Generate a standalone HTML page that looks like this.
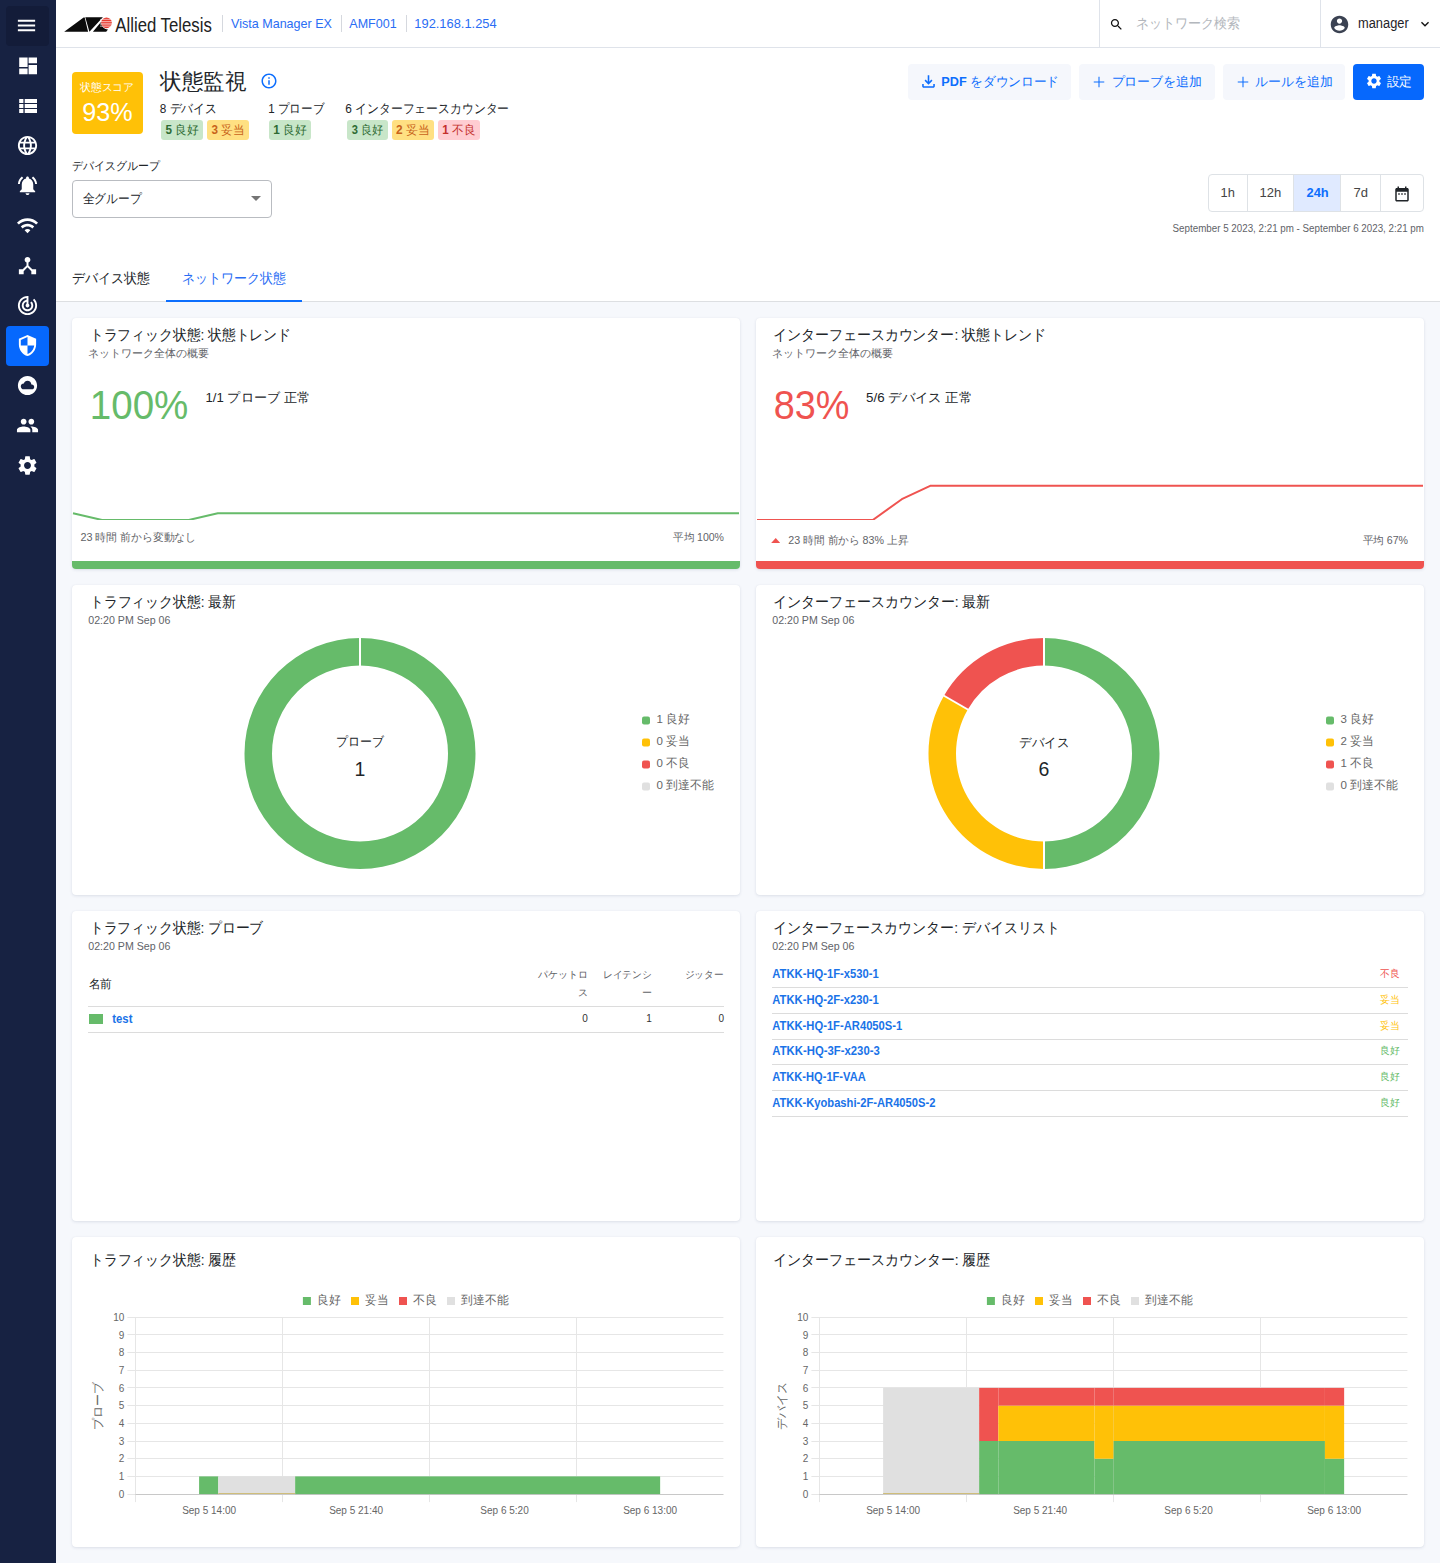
<!DOCTYPE html>
<html lang="ja">
<head>
<meta charset="utf-8">
<title>Vista Manager EX</title>
<style>
*{box-sizing:border-box;margin:0;padding:0}
html,body{width:1440px;height:1563px;overflow:hidden}
body{font-family:"Liberation Sans",sans-serif;background:#f6f8fc;color:#212529;position:relative;font-size:13px;line-height:16px}
.t{position:absolute;white-space:nowrap;display:block;transform-origin:0 50%}
.a{position:absolute;display:block}
#side{position:absolute;left:0;top:0;width:56px;height:1563px;background:#172242}
#side .it{position:absolute;left:6px;width:43px;height:40px;border-radius:4px}
#side .it svg{position:absolute;left:10.200px;top:8px;width:23px;height:23px;fill:#fff}
#side .menu svg{left:9.300px;top:8px}
#side .menu{background:#131c39}
#side .act{background:#0668fd}
#top{position:absolute;left:56px;top:0;width:1384px;height:48px;background:#fff;border-bottom:1px solid #dfe3ea}
#hdr{position:absolute;left:56px;top:48px;width:1384px;height:254px;background:#fff;border-bottom:1px solid #dddfe2}
.card{position:absolute;width:668px;background:#fff;border-radius:4px;box-shadow:0 1px 3px rgba(40,60,100,.12),0 0 1px rgba(40,60,100,.07)}
.vl{position:absolute;width:1px;background:#dfe3ea}
.hl{position:absolute;height:1px;background:#dcdcdc}
.btn{position:absolute;top:64px;height:36px;border-radius:4px;background:#f5f7fc}
.chip{position:absolute;top:120px;height:19.5px;border-radius:3px}
svg{display:block}
</style>
</head>
<body>
<div id="side">
<div class="it menu" style="top:6px"><svg viewBox="0 0 24 24"><path d="M3 18h18v-2H3v2zm0-5h18v-2H3v2zm0-7v2h18V6H3z"/></svg></div>
<div class="it" style="top:46px"><svg style="left:0;top:0;width:43px;height:40px" viewBox="6 46 43 40"><path d="M19.200 57.600h8.400v9.300h-8.400zM19.200 68.400h8.400v5.900h-8.400zM28.600 57.600H37v5.700h-8.400zM28.600 64.900H37v9.400h-8.400z"/></svg></div>
<div class="it" style="top:86px"><svg style="left:0;top:0;width:43px;height:40px" viewBox="6 86 43 40"><path d="M19.200 99h4.200v4.100h-4.200zM19.200 104.100h4.200v3.900h-4.200zM19.200 109h4.200v4h-4.200zM24.700 99H37v4.100H24.700zM24.700 104.100H37v3.900H24.700zM24.700 109H37v4H24.700z"/></svg></div>
<div class="it" style="top:126px"><svg viewBox="0 0 24 24"><path d="M11.99 2C6.47 2 2 6.48 2 12s4.47 10 9.99 10C17.52 22 22 17.52 22 12S17.52 2 11.99 2zm6.93 6h-2.95c-.32-1.25-.78-2.45-1.38-3.56 1.84.63 3.37 1.91 4.33 3.56zM12 4.04c.83 1.2 1.48 2.53 1.91 3.96h-3.82c.43-1.43 1.08-2.76 1.91-3.96zM4.26 14C4.1 13.36 4 12.69 4 12s.1-1.36.26-2h3.38c-.08.66-.14 1.32-.14 2 0 .68.06 1.34.14 2H4.26zm.82 2h2.95c.32 1.25.78 2.45 1.38 3.56-1.84-.63-3.37-1.9-4.33-3.56zm2.95-8H5.08c.96-1.66 2.49-2.93 4.33-3.56C8.81 5.55 8.35 6.75 8.03 8zM12 19.96c-.83-1.2-1.48-2.53-1.91-3.96h3.82c-.43 1.43-1.08 2.76-1.91 3.96zM14.34 14H9.66c-.09-.66-.16-1.32-.16-2 0-.68.07-1.35.16-2h4.68c.09.65.16 1.32.16 2 0 .68-.07 1.34-.16 2zm.25 5.56c.6-1.11 1.06-2.31 1.38-3.56h2.95c-.96 1.65-2.49 2.93-4.33 3.56zM16.36 14c.08-.66.14-1.32.14-2 0-.68-.06-1.34-.14-2h3.38c.16.64.26 1.31.26 2s-.1 1.36-.26 2h-3.38z"/></svg></div>
<div class="it" style="top:166px"><svg viewBox="0 0 24 24"><path d="M7.58 4.08L6.15 2.65C3.75 4.48 2.17 7.3 2.03 10.5h2c.15-2.65 1.51-4.97 3.55-6.42zm12.39 6.42h2c-.15-3.2-1.73-6.02-4.12-7.85l-1.42 1.43c2.02 1.45 3.39 3.77 3.54 6.42zM18 11c0-3.07-1.64-5.64-4.5-6.32V4c0-.83-.67-1.5-1.5-1.5s-1.5.67-1.5 1.5v.68C7.63 5.36 6 7.92 6 11v5l-2 2v1h16v-1l-2-2v-5zm-6 11c.14 0 .27-.01.4-.04.65-.14 1.18-.58 1.44-1.18.1-.24.15-.5.15-.78h-4c.01 1.1.9 2 2.01 2z"/></svg></div>
<div class="it" style="top:206px"><svg viewBox="0 0 24 24"><path d="M1 9l2 2c4.97-4.97 13.03-4.97 18 0l2-2C16.93 2.93 7.08 2.93 1 9zm8 8l3 3 3-3c-1.65-1.66-4.34-1.66-6 0zm-4-4l2 2c2.76-2.76 7.24-2.76 10 0l2-2C15.14 9.14 8.87 9.14 5 13z"/></svg></div>
<div class="it" style="top:246px"><svg viewBox="0 0 24 24"><path d="M17 16l-4-4V8.82C14.16 8.4 15 7.3 15 6c0-1.66-1.34-3-3-3S9 4.34 9 6c0 1.3.84 2.4 2 2.82V12l-4 4H3v5h5v-3.05l4-4.2 4 4.2V21h5v-5h-4z"/></svg></div>
<div class="it" style="top:286px"><svg viewBox="0 0 24 24"><path d="M19.07 4.93l-1.41 1.41C19.1 7.79 20 9.79 20 12c0 4.42-3.58 8-8 8s-8-3.58-8-8c0-4.08 3.05-7.44 7-7.93v2.02C8.16 6.57 6 9.03 6 12c0 3.31 2.69 6 6 6s6-2.69 6-6c0-1.66-.67-3.16-1.76-4.24l-1.41 1.41C15.55 9.9 16 10.9 16 12c0 2.21-1.79 4-4 4s-4-1.79-4-4c0-1.86 1.28-3.41 3-3.86v2.14c-.6.35-1 .98-1 1.72 0 1.1.9 2 2 2s2-.9 2-2c0-.74-.4-1.38-1-1.72V2h-1C6.48 2 2 6.48 2 12s4.48 10 10 10 10-4.48 10-10c0-2.76-1.12-5.26-2.93-7.07z"/></svg></div>
<div class="it act" style="top:326px"><svg viewBox="0 0 24 24"><path d="M12 1L3 5v6c0 5.55 3.84 10.74 9 12 5.16-1.26 9-6.45 9-12V5l-9-4zm0 10.99h7c-.53 4.12-3.28 7.79-7 8.94V12H5V6.3l7-3.11v8.8z"/></svg></div>
<div class="it" style="top:366px"><svg viewBox="0 0 24 24"><path d="M12 2C6.48 2 2 6.48 2 12s4.48 10 10 10 10-4.48 10-10S17.520 2 12 2zm4.5 14H8c-1.660 0-3-1.340-3-3s1.340-3 3-3l.14.01C8.58 8.28 10.13 7 12 7c2.21 0 4 1.79 4 4h.5c1.38 0 2.5 1.12 2.5 2.5S17.880 16 16.5 16z"/></svg></div>
<div class="it" style="top:406px"><svg viewBox="0 0 24 24"><path d="M16 11c1.66 0 2.99-1.34 2.99-3S17.66 5 16 5c-1.66 0-3 1.34-3 3s1.34 3 3 3zm-8 0c1.66 0 2.99-1.34 2.99-3S9.66 5 8 5C6.34 5 5 6.34 5 8s1.34 3 3 3zm0 2c-2.33 0-7 1.17-7 3.5V19h14v-2.5c0-2.33-4.67-3.5-7-3.5zm8 0c-.29 0-.62.02-.97.05 1.16.84 1.97 1.97 1.97 3.45V19h6v-2.5c0-2.33-4.67-3.5-7-3.5z"/></svg></div>
<div class="it" style="top:446px"><svg viewBox="0 0 24 24"><path d="M19.14 12.94c.04-.3.06-.61.06-.94 0-.32-.02-.64-.07-.94l2.03-1.58c.18-.14.23-.41.12-.61l-1.92-3.32c-.12-.22-.37-.29-.59-.22l-2.39.96c-.5-.38-1.03-.7-1.62-.94l-.36-2.54c-.04-.24-.24-.41-.48-.41h-3.84c-.24 0-.43.17-.47.41l-.36 2.54c-.59.24-1.13.57-1.62.94l-2.39-.96c-.22-.08-.47 0-.59.22L2.74 8.87c-.12.21-.08.47.12.61l2.03 1.58c-.05.3-.09.63-.09.94s.02.64.07.94l-2.03 1.58c-.18.14-.23.41-.12.61l1.92 3.32c.12.22.37.29.59.22l2.39-.96c.5.38 1.03.7 1.62.94l.36 2.54c.05.24.24.41.48.41h3.84c.24 0 .44-.17.47-.41l.36-2.54c.59-.24 1.13-.56 1.62-.94l2.39.96c.22.08.47 0 .59-.22l1.92-3.32c.12-.22.07-.47-.12-.61l-2.01-1.58zM12 15.6c-1.98 0-3.6-1.62-3.6-3.6s1.62-3.6 3.6-3.600 3.600 1.620 3.600 3.600-1.620 3.600-3.600 3.600z"/></svg></div>
</div>
<div id="top"></div>
<svg class="a" style="left:60px;top:10px" width="160" height="30" viewBox="60 10 160 30">
<path fill="#0b0b0b" d="M64.200 31.700L83.600 17.400h1.100l3.400 14.300zM85.300 17.300h17.600L89.400 31.700zM92.900 31.700l8.500-10.300c-.6 4.200 2.300 7.700 6.600 8.100l-1.800 2.200z"/>
<circle cx="106.500" cy="22.800" r="5.400" fill="#e63a30"/>
<path stroke="#fff" stroke-width=".55" d="M100 19.400h13M100 21.500h13M100 23.300h13M100 24.800h13M100 26.300h13"/>
<text x="115.300" y="31.500" font-family="Liberation Sans,sans-serif" font-size="19.600" fill="#222" textLength="96.500" lengthAdjust="spacingAndGlyphs">Allied Telesis</text>
</svg>
<div class="vl" style="left:222px;top:15px;height:17px;background:#d5d8de"></div><div class="vl" style="left:341px;top:15px;height:17px;background:#d5d8de"></div><div class="vl" style="left:406px;top:15px;height:17px;background:#d5d8de"></div>
<div class="vl" style="left:1099px;top:0;height:47px"></div><div class="vl" style="left:1320px;top:0;height:47px"></div>
<svg class="a" style="left:1108.5px;top:16.5px" width="15" height="15" viewBox="0 0 24 24"><path fill="#111" d="M15.5 14h-.79l-.28-.27C15.41 12.59 16 11.11 16 9.5 16 5.91 13.09 3 9.5 3S3 5.91 3 9.5 5.91 16 9.5 16c1.61 0 3.09-.59 4.23-1.57l.27.28v.79l5 4.99L20.49 19l-4.99-5zm-6 0C7.01 14 5 11.99 5 9.5S7.01 5 9.5 5 14 7.01 14 9.5 11.99 14 9.5 14z"/></svg><svg class="a" style="left:1329px;top:14px" width="21" height="21" viewBox="0 0 24 24"><path fill="#3b4252" d="M12 2C6.48 2 2 6.48 2 12s4.48 10 10 10 10-4.48 10-10S17.52 2 12 2zm0 3c1.66 0 3 1.34 3 3s-1.34 3-3 3-3-1.34-3-3 1.34-3 3-3zm0 14.2c-2.5 0-4.71-1.28-6-3.22.03-1.990 4-3.080 6-3.080 1.990 0 5.970 1.090 6 3.080-1.290 1.940-3.500 3.220-6 3.220z"/></svg><svg class="a" style="left:1416.5px;top:16px" width="16" height="16" viewBox="0 0 24 24"><path fill="#111" d="M16.59 8.59L12 13.17 7.41 8.59 6 10l6 6 6-6z"/></svg><div id="hdr"></div>
<div class="a" style="left:72px;top:72px;width:71px;height:62px;border-radius:4px;background:#ffc107"></div><svg class="a" style="left:260px;top:72.3px" width="18" height="18" viewBox="0 0 24 24"><path fill="#0d6efd" d="M11 7h2v2h-2zm0 4h2v6h-2zm1-9C6.48 2 2 6.48 2 12s4.48 10 10 10 10-4.48 10-10S17.52 2 12 2zm0 18c-4.41 0-8-3.59-8-8s3.59-8 8-8 8 3.59 8 8-3.59 8-8 8z"/></svg><div class="chip" style="left:161px;width:42px;background:#c8e6c9"></div><div class="chip" style="left:207px;width:42px;background:#ffe082"></div><div class="chip" style="left:268.7px;width:42.10000000000002px;background:#c8e6c9"></div><div class="chip" style="left:347.3px;width:40.39999999999998px;background:#c8e6c9"></div><div class="chip" style="left:391.5px;width:42.5px;background:#ffe082"></div><div class="chip" style="left:437.8px;width:41.89999999999998px;background:#ffcdd2"></div>
<div class="btn" style="left:908px;width:163px"></div><div class="btn" style="left:1079px;width:136px"></div><div class="btn" style="left:1223px;width:122px"></div><div class="btn" style="left:1353px;width:71px;background:#0668fd"></div>
<svg class="a" style="left:919px;top:71.5px" width="19" height="19" viewBox="0 0 24 24"><path fill="#0d6efd" d="M18 15v3H6v-3H4v3c0 1.1.9 2 2 2h12c1.1 0 2-.9 2-2v-3h-2zm-1-4l-1.41-1.41L13 12.17V4h-2v8.17L8.41 9.59 7 11l5 5 5-5z"/></svg><svg class="a" style="left:1090.4px;top:72.5px" width="18" height="18" viewBox="0 0 24 24"><path fill="#0d6efd" d="M19 12.700h-6.300V19h-1.400v-6.300H5v-1.400h6.300V5h1.400v6.300H19z"/></svg><svg class="a" style="left:1234.2px;top:72.5px" width="18" height="18" viewBox="0 0 24 24"><path fill="#0d6efd" d="M19 12.700h-6.300V19h-1.400v-6.300H5v-1.400h6.300V5h1.400v6.300H19z"/></svg><svg class="a" style="left:1365px;top:72px" width="18" height="18" viewBox="0 0 24 24"><path fill="#fff" d="M19.14 12.94c.04-.3.06-.61.06-.94 0-.32-.02-.64-.07-.94l2.03-1.58c.18-.14.23-.41.12-.61l-1.92-3.32c-.12-.22-.37-.29-.59-.22l-2.39.96c-.5-.38-1.03-.7-1.62-.94l-.36-2.54c-.04-.24-.24-.41-.48-.41h-3.84c-.24 0-.43.17-.47.41l-.36 2.54c-.59.24-1.13.57-1.62.94l-2.39-.96c-.22-.08-.47 0-.59.22L2.74 8.87c-.12.21-.08.47.12.61l2.03 1.58c-.05.3-.09.63-.09.94s.02.64.07.94l-2.03 1.58c-.18.14-.23.41-.12.61l1.92 3.32c.12.22.37.29.59.22l2.39-.96c.5.38 1.03.7 1.62.94l.36 2.54c.05.24.24.41.48.41h3.84c.24 0 .44-.17.47-.41l.36-2.54c.59-.24 1.13-.56 1.62-.94l2.39.96c.22.08.47 0 .59-.22l1.92-3.32c.12-.22.07-.47-.12-.61l-2.01-1.58zM12 15.6c-1.98 0-3.6-1.62-3.6-3.6s1.62-3.6 3.6-3.600 3.600 1.620 3.600 3.600-1.620 3.600-3.600 3.600z"/></svg>
<div class="a" style="left:72px;top:180px;width:200px;height:38px;border:1px solid #b9bcc1;border-radius:4px;background:#fff"></div><svg class="a" style="left:251px;top:196px" width="10" height="5"><path d="M0 0h10L5 5z" fill="#757575"/></svg>
<div class="a" style="left:1207.500px;top:174px;width:216.500px;height:38px;border:1px solid #dee2e6;border-radius:4px;background:#fff"></div><div class="a" style="left:1293.500px;top:175px;width:47px;height:36px;background:#e0eaff"></div><div class="vl" style="left:1247px;top:175px;height:36px;background:#dee2e6"></div><div class="vl" style="left:1293px;top:175px;height:36px;background:#dee2e6"></div><div class="vl" style="left:1340px;top:175px;height:36px;background:#dee2e6"></div><div class="vl" style="left:1380px;top:175px;height:36px;background:#dee2e6"></div><svg class="a" style="left:1393px;top:185px" width="18" height="18" viewBox="0 0 24 24"><path fill="#212529" d="M9 11H7v2h2v-2zm4 0h-2v2h2v-2zm4 0h-2v2h2v-2zm2-7h-1V2h-2v2H8V2H6v2H5c-1.11 0-1.99.9-1.99 2L3 20c0 1.1.89 2 2 2h14c1.1 0 2-.9 2-2V6c0-1.1-.9-2-2-2zm0 16H5V9h14v11z"/></svg>
<div class="a" style="left:166px;top:300px;width:136px;height:2px;background:#0d6efd"></div>
<div class="card" style="left:72px;top:318px;height:251px"></div><div class="a" style="left:72px;top:561px;width:668px;height:8px;background:#66bb6a;border-radius:0 0 4px 4px"></div><svg class="a" style="left:72px;top:470px;overflow:hidden" width="667" height="50" viewBox="0 0 667 50"><path d="M1.0 43.2 L30.0 50.0 L58.9 50.0 L87.9 50.0 L116.8 50.0 L145.8 43.2 L174.7 43.2 L203.7 43.2 L232.7 43.2 L261.6 43.2 L290.6 43.2 L319.5 43.2 L348.5 43.2 L377.4 43.2 L406.4 43.2 L435.3 43.2 L464.3 43.2 L493.3 43.2 L522.2 43.2 L551.2 43.2 L580.1 43.2 L609.1 43.2 L638.0 43.2 L667.0 43.2" fill="none" stroke="#66bb6a" stroke-width="2" stroke-linejoin="round"/></svg>
<div class="card" style="left:756px;top:318px;height:251px"></div><div class="a" style="left:756px;top:561px;width:668px;height:8px;background:#ef5350;border-radius:0 0 4px 4px"></div><svg class="a" style="left:756px;top:470px;overflow:hidden" width="667" height="50" viewBox="0 0 667 50"><path d="M1.0 50.0 L30.0 50.0 L58.9 50.0 L87.9 50.0 L116.8 50.0 L145.8 29.2 L174.7 15.7 L203.7 15.7 L232.7 15.7 L261.6 15.7 L290.6 15.7 L319.5 15.7 L348.5 15.7 L377.4 15.7 L406.4 15.7 L435.3 15.7 L464.3 15.7 L493.3 15.7 L522.2 15.7 L551.2 15.7 L580.1 15.7 L609.1 15.7 L638.0 15.7 L667.0 15.7" fill="none" stroke="#ef5350" stroke-width="2" stroke-linejoin="round"/></svg><svg class="a" style="left:771px;top:538px" width="9.400" height="5.200"><path d="M0 5.200L4.700 0l4.700 5.200z" fill="#ef5350"/></svg>
<div class="card" style="left:72px;top:585px;height:310px"></div><svg class="a" style="left:72px;top:585px" width="668" height="310" viewBox="0 0 668 310"><path fill-rule="evenodd" fill="#66bb6a" d="M172.50 168.50a115.50 115.50 0 1 0 231.00 0a115.50 115.50 0 1 0 -231.00 0zM200.00 168.50a88.00 88.00 0 1 0 176.00 0a88.00 88.00 0 1 0 -176.00 0z"/><path d="M288.00 81.50L288.00 52.00" stroke="#fff" stroke-width="2"/><rect x="570" y="131.5" width="8" height="8" rx="2" fill="#66bb6a"/><rect x="570" y="153.5" width="8" height="8" rx="2" fill="#ffc107"/><rect x="570" y="175.5" width="8" height="8" rx="2" fill="#ef5350"/><rect x="570" y="197.5" width="8" height="8" rx="2" fill="#e0e0e0"/></svg>
<div class="card" style="left:756px;top:585px;height:310px"></div><svg class="a" style="left:756px;top:585px" width="668" height="310" viewBox="0 0 668 310"><path fill="#66bb6a" d="M288.00 53.00A115.50 115.50 0 0 1 288.00 284.00L288.00 256.50A88.00 88.00 0 0 0 288.00 80.50z"/><path fill="#ffc107" d="M288.00 284.00A115.50 115.50 0 0 1 187.97 110.75L211.79 124.50A88.00 88.00 0 0 0 288.00 256.50z"/><path fill="#ef5350" d="M187.97 110.75A115.50 115.50 0 0 1 288.00 53.00L288.00 80.50A88.00 88.00 0 0 0 211.79 124.50z"/><path d="M288.00 81.50L288.00 52.00" stroke="#fff" stroke-width="2"/><path d="M288.00 255.50L288.00 285.00" stroke="#fff" stroke-width="2"/><path d="M212.66 125.00L187.11 110.25" stroke="#fff" stroke-width="2"/><rect x="570" y="131.5" width="8" height="8" rx="2" fill="#66bb6a"/><rect x="570" y="153.5" width="8" height="8" rx="2" fill="#ffc107"/><rect x="570" y="175.5" width="8" height="8" rx="2" fill="#ef5350"/><rect x="570" y="197.5" width="8" height="8" rx="2" fill="#e0e0e0"/></svg>
<div class="card" style="left:72px;top:911px;height:310px"></div><div class="hl" style="left:88px;top:1006px;width:636px"></div><div class="hl" style="left:88px;top:1032px;width:636px"></div><div class="a" style="left:89px;top:1014px;width:14px;height:10px;background:#66bb6a"></div>
<div class="card" style="left:756px;top:911px;height:310px"></div><div class="hl" style="left:772px;top:986.9px;width:636px"></div><div class="hl" style="left:772px;top:1012.7px;width:636px"></div><div class="hl" style="left:772px;top:1038.5px;width:636px"></div><div class="hl" style="left:772px;top:1064.3px;width:636px"></div><div class="hl" style="left:772px;top:1090.1px;width:636px"></div><div class="hl" style="left:772px;top:1115.9px;width:636px"></div>
<div class="card" style="left:72px;top:1237px;height:310px"></div><svg class="a" style="left:0;top:1237px" width="1440" height="310" viewBox="0 1237 1440 310"><path d="M127.4 1494.5H723.4M127.4 1476.5H723.4M127.4 1458.5H723.4M127.4 1441.5H723.4M127.4 1423.5H723.4M127.4 1405.5H723.4M127.4 1387.5H723.4M127.4 1370.5H723.4M127.4 1352.5H723.4M127.4 1334.5H723.4M127.4 1317.5H723.4M135.5 1317.1V1502.1M282.5 1317.1V1502.1M429.5 1317.1V1502.1M576.5 1317.1V1502.1" stroke="#e6e6e6" stroke-width="1" fill="none"/><path d="M135.4 1494.5H723.4" stroke="#c8c8c8" stroke-width="1" fill="none"/><rect x="199.10" y="1476.40" width="19.21" height="17.70" fill="#66bb6a"/><rect x="218.31" y="1476.40" width="76.84" height="17.70" fill="#e0e0e0"/><rect x="295.15" y="1476.40" width="364.99" height="17.70" fill="#66bb6a"/><rect x="218.31" y="1493" width="76.84" height=".9" fill="#cdb96f"/><rect x="302.9" y="1297" width="8" height="8" fill="#66bb6a"/><rect x="351.0" y="1297" width="8" height="8" fill="#ffc107"/><rect x="399.0" y="1297" width="8" height="8" fill="#ef5350"/><rect x="447.0" y="1297" width="8" height="8" fill="#e0e0e0"/></svg>
<div class="card" style="left:756px;top:1237px;height:310px"></div><svg class="a" style="left:0;top:1237px" width="1440" height="310" viewBox="0 1237 1440 310"><path d="M811.4 1494.5H1407.4M811.4 1476.5H1407.4M811.4 1458.5H1407.4M811.4 1441.5H1407.4M811.4 1423.5H1407.4M811.4 1405.5H1407.4M811.4 1387.5H1407.4M811.4 1370.5H1407.4M811.4 1352.5H1407.4M811.4 1334.5H1407.4M811.4 1317.5H1407.4M819.5 1317.1V1502.1M966.5 1317.1V1502.1M1113.5 1317.1V1502.1M1260.5 1317.1V1502.1" stroke="#e6e6e6" stroke-width="1" fill="none"/><path d="M819.4 1494.5H1407.4" stroke="#c8c8c8" stroke-width="1" fill="none"/><rect x="883.10" y="1387.90" width="96.05" height="106.20" fill="#e0e0e0"/><rect x="979.15" y="1441.00" width="19.21" height="53.10" fill="#66bb6a"/><rect x="979.15" y="1387.90" width="19.21" height="53.10" fill="#ef5350"/><rect x="998.36" y="1441.00" width="96.05" height="53.10" fill="#66bb6a"/><rect x="998.36" y="1405.60" width="96.05" height="35.40" fill="#ffc107"/><rect x="998.36" y="1387.90" width="96.05" height="17.70" fill="#ef5350"/><rect x="1094.41" y="1458.70" width="19.21" height="35.40" fill="#66bb6a"/><rect x="1094.41" y="1405.60" width="19.21" height="53.10" fill="#ffc107"/><rect x="1094.41" y="1387.90" width="19.21" height="17.70" fill="#ef5350"/><rect x="1113.62" y="1441.00" width="211.31" height="53.10" fill="#66bb6a"/><rect x="1113.62" y="1405.60" width="211.31" height="35.40" fill="#ffc107"/><rect x="1113.62" y="1387.90" width="211.31" height="17.70" fill="#ef5350"/><rect x="1324.93" y="1458.70" width="19.21" height="35.40" fill="#66bb6a"/><rect x="1324.93" y="1405.60" width="19.21" height="53.10" fill="#ffc107"/><rect x="1324.93" y="1387.90" width="19.21" height="17.70" fill="#ef5350"/><rect x="883.10" y="1493" width="96.05" height=".9" fill="#cdb96f"/><rect x="986.9" y="1297" width="8" height="8" fill="#66bb6a"/><rect x="1035.0" y="1297" width="8" height="8" fill="#ffc107"/><rect x="1083.0" y="1297" width="8" height="8" fill="#ef5350"/><rect x="1131.0" y="1297" width="8" height="8" fill="#e0e0e0"/></svg>
<svg class="a" style="left:0;top:0" width="1440" height="1563" viewBox="0 0 1440 1563" font-family="Liberation Sans,sans-serif">
<text x="231.0" y="28.2" font-size="13.5" fill="#2a6df4" textLength="101.0" lengthAdjust="spacingAndGlyphs">Vista Manager EX</text>
<text x="349.3" y="28.2" font-size="13.5" fill="#2a6df4" textLength="47.4" lengthAdjust="spacingAndGlyphs">AMF001</text>
<text x="414.3" y="28.2" font-size="13.5" fill="#2a6df4" textLength="82.4" lengthAdjust="spacingAndGlyphs">192.168.1.254</text>
<text x="1135.5" y="28.4" font-size="14" fill="#b3b7bd" textLength="104.5" lengthAdjust="spacingAndGlyphs">ネットワーク検索</text>
<text x="1358.0" y="28.4" font-size="14" fill="#1f2328" textLength="50.7" lengthAdjust="spacingAndGlyphs">manager</text>
<text x="80.2" y="91.4" font-size="11" fill="#fff" textLength="53.8" lengthAdjust="spacingAndGlyphs">状態スコア</text>
<text x="82.3" y="121.3" font-size="25.5" fill="#fff" textLength="50.4" lengthAdjust="spacingAndGlyphs">93%</text>
<text x="160.0" y="88.8" font-size="22" fill="#212529" textLength="86.5" lengthAdjust="spacingAndGlyphs">状態監視</text>
<text x="159.8" y="113.0" font-size="13" fill="#212529" textLength="57.0" lengthAdjust="spacingAndGlyphs">8 デバイス</text>
<text x="268.2" y="113.0" font-size="13" fill="#212529" textLength="56.0" lengthAdjust="spacingAndGlyphs">1 プローブ</text>
<text x="345.3" y="113.0" font-size="13" fill="#212529" textLength="163.9" lengthAdjust="spacingAndGlyphs">6 インターフェースカウンター</text>
<text x="165.5" y="134.0" font-size="12" fill="#2e6b33" textLength="33.2" lengthAdjust="spacingAndGlyphs"><tspan font-weight="700">5</tspan> 良好</text>
<text x="211.5" y="134.0" font-size="12" fill="#c8631a" textLength="33.2" lengthAdjust="spacingAndGlyphs"><tspan font-weight="700">3</tspan> 妥当</text>
<text x="273.2" y="134.0" font-size="12" fill="#2e6b33" textLength="33.3" lengthAdjust="spacingAndGlyphs"><tspan font-weight="700">1</tspan> 良好</text>
<text x="351.8" y="134.0" font-size="12" fill="#2e6b33" textLength="31.6" lengthAdjust="spacingAndGlyphs"><tspan font-weight="700">3</tspan> 良好</text>
<text x="396.0" y="134.0" font-size="12" fill="#c8631a" textLength="33.7" lengthAdjust="spacingAndGlyphs"><tspan font-weight="700">2</tspan> 妥当</text>
<text x="442.3" y="134.0" font-size="12" fill="#c4302b" textLength="33.1" lengthAdjust="spacingAndGlyphs"><tspan font-weight="700">1</tspan> 不良</text>
<text x="941.3" y="85.8" font-size="13" fill="#0d6efd" textLength="117.7" lengthAdjust="spacingAndGlyphs"><tspan font-weight="700">PDF</tspan> をダウンロード</text>
<text x="1111.5" y="85.8" font-size="13" fill="#0d6efd" textLength="90.5" lengthAdjust="spacingAndGlyphs">プローブを追加</text>
<text x="1255.3" y="85.8" font-size="13" fill="#0d6efd" textLength="77.3" lengthAdjust="spacingAndGlyphs">ルールを追加</text>
<text x="1386.6" y="85.8" font-size="13" fill="#fff" textLength="25.4" lengthAdjust="spacingAndGlyphs">設定</text>
<text x="72.3" y="170.3" font-size="11.5" fill="#212529" textLength="87.5" lengthAdjust="spacingAndGlyphs">デバイスグループ</text>
<text x="82.7" y="202.8" font-size="12.5" fill="#212529" textLength="58.8" lengthAdjust="spacingAndGlyphs">全グループ</text>
<text x="1220.5" y="197.3" font-size="13.5" fill="#444" textLength="14.3" lengthAdjust="spacingAndGlyphs">1h</text>
<text x="1259.5" y="197.3" font-size="13.5" fill="#444" textLength="21.8" lengthAdjust="spacingAndGlyphs">12h</text>
<text x="1306.5" y="197.3" font-size="13.5" fill="#0d6efd" font-weight="700" textLength="22.2" lengthAdjust="spacingAndGlyphs">24h</text>
<text x="1353.5" y="197.3" font-size="13.5" fill="#444" textLength="14.5" lengthAdjust="spacingAndGlyphs">7d</text>
<text x="1172.6" y="232.3" font-size="10" fill="#5f6368" textLength="251.3" lengthAdjust="spacingAndGlyphs">September 5 2023, 2:21 pm - September 6 2023, 2:21 pm</text>
<text x="72.3" y="283.4" font-size="14" fill="#212529" textLength="77.5" lengthAdjust="spacingAndGlyphs">デバイス状態</text>
<text x="182.0" y="283.4" font-size="14" fill="#2a6df4" textLength="103.7" lengthAdjust="spacingAndGlyphs">ネットワーク状態</text>
<text x="89.8" y="339.9" font-size="14.8" fill="#212529" textLength="201.2" lengthAdjust="spacingAndGlyphs">トラフィック状態: 状態トレンド</text>
<text x="88.0" y="357.0" font-size="11" fill="#5f6368" textLength="120.5" lengthAdjust="spacingAndGlyphs">ネットワーク全体の概要</text>
<text x="89.8" y="418.7" font-size="40" fill="#66bb6a" textLength="98.5" lengthAdjust="spacingAndGlyphs">100%</text>
<text x="205.5" y="402.2" font-size="13" fill="#212529" textLength="104.3" lengthAdjust="spacingAndGlyphs">1/1 プローブ 正常</text>
<text x="80.4" y="541.3" font-size="11" fill="#5f6368" textLength="115.7" lengthAdjust="spacingAndGlyphs">23 時間 前から変動なし</text>
<text x="673.0" y="541.3" font-size="11" fill="#5f6368" textLength="51.0" lengthAdjust="spacingAndGlyphs">平均 100%</text>
<text x="772.7" y="339.9" font-size="14.8" fill="#212529" textLength="273.3" lengthAdjust="spacingAndGlyphs">インターフェースカウンター: 状態トレンド</text>
<text x="772.0" y="357.0" font-size="11" fill="#5f6368" textLength="120.5" lengthAdjust="spacingAndGlyphs">ネットワーク全体の概要</text>
<text x="773.8" y="418.7" font-size="40" fill="#ef5350" textLength="75.7" lengthAdjust="spacingAndGlyphs">83%</text>
<text x="866.0" y="402.2" font-size="13" fill="#212529" textLength="106.0" lengthAdjust="spacingAndGlyphs">5/6 デバイス 正常</text>
<text x="788.3" y="544.1" font-size="11" fill="#5f6368" textLength="120.0" lengthAdjust="spacingAndGlyphs">23 時間 前から 83% 上昇</text>
<text x="1362.5" y="544.1" font-size="11" fill="#5f6368" textLength="45.5" lengthAdjust="spacingAndGlyphs">平均 67%</text>
<text x="89.8" y="606.6" font-size="14.8" fill="#212529" textLength="146.2" lengthAdjust="spacingAndGlyphs">トラフィック状態: 最新</text>
<text x="88.3" y="624.1" font-size="11" fill="#5f6368" textLength="82.1" lengthAdjust="spacingAndGlyphs">02:20 PM Sep 06</text>
<text x="335.6" y="746.0" font-size="13" fill="#212529" textLength="47.9" lengthAdjust="spacingAndGlyphs">プローブ</text>
<text x="360.0" y="775.8" font-size="19.5" fill="#212529" text-anchor="middle">1</text>
<text x="656.4" y="723.1" font-size="11.7" fill="#666" textLength="33.2" lengthAdjust="spacingAndGlyphs">1 良好</text>
<text x="656.4" y="745.1" font-size="11.7" fill="#666" textLength="33.2" lengthAdjust="spacingAndGlyphs">0 妥当</text>
<text x="656.4" y="767.1" font-size="11.7" fill="#666" textLength="33.2" lengthAdjust="spacingAndGlyphs">0 不良</text>
<text x="656.4" y="789.1" font-size="11.7" fill="#666" textLength="57.3" lengthAdjust="spacingAndGlyphs">0 到達不能</text>
<text x="772.7" y="606.6" font-size="14.8" fill="#212529" textLength="217.8" lengthAdjust="spacingAndGlyphs">インターフェースカウンター: 最新</text>
<text x="772.3" y="624.1" font-size="11" fill="#5f6368" textLength="82.1" lengthAdjust="spacingAndGlyphs">02:20 PM Sep 06</text>
<text x="1019.3" y="747.0" font-size="13" fill="#212529" textLength="49.7" lengthAdjust="spacingAndGlyphs">デバイス</text>
<text x="1044.0" y="775.8" font-size="19.5" fill="#212529" text-anchor="middle">6</text>
<text x="1340.4" y="723.1" font-size="11.7" fill="#666" textLength="33.2" lengthAdjust="spacingAndGlyphs">3 良好</text>
<text x="1340.4" y="745.1" font-size="11.7" fill="#666" textLength="33.2" lengthAdjust="spacingAndGlyphs">2 妥当</text>
<text x="1340.4" y="767.1" font-size="11.7" fill="#666" textLength="33.2" lengthAdjust="spacingAndGlyphs">1 不良</text>
<text x="1340.4" y="789.1" font-size="11.7" fill="#666" textLength="57.3" lengthAdjust="spacingAndGlyphs">0 到達不能</text>
<text x="89.8" y="932.6" font-size="14.8" fill="#212529" textLength="173.5" lengthAdjust="spacingAndGlyphs">トラフィック状態: プローブ</text>
<text x="88.3" y="950.1" font-size="11" fill="#5f6368" textLength="82.1" lengthAdjust="spacingAndGlyphs">02:20 PM Sep 06</text>
<text x="88.5" y="988.0" font-size="12" fill="#212529" textLength="23.3" lengthAdjust="spacingAndGlyphs">名前</text>
<text x="538.3" y="978.1" font-size="10" fill="#5f6368" textLength="49.4" lengthAdjust="spacingAndGlyphs">パケットロ</text>
<text x="587.7" y="995.9" font-size="10" fill="#5f6368" text-anchor="end">ス</text>
<text x="603.0" y="978.1" font-size="10" fill="#5f6368" textLength="48.7" lengthAdjust="spacingAndGlyphs">レイテンシ</text>
<text x="651.7" y="995.9" font-size="10" fill="#5f6368" text-anchor="end">ー</text>
<text x="684.7" y="978.1" font-size="10" fill="#5f6368" textLength="38.5" lengthAdjust="spacingAndGlyphs">ジッター</text>
<text x="112.3" y="1023.0" font-size="12" fill="#1a73e8" font-weight="700" textLength="20.1" lengthAdjust="spacingAndGlyphs">test</text>
<text x="587.9" y="1021.9" font-size="10" fill="#333" text-anchor="end">0</text>
<text x="651.9" y="1021.9" font-size="10" fill="#333" text-anchor="end">1</text>
<text x="724.0" y="1021.9" font-size="10" fill="#333" text-anchor="end">0</text>
<text x="772.7" y="932.6" font-size="14.8" fill="#212529" textLength="286.8" lengthAdjust="spacingAndGlyphs">インターフェースカウンター: デバイスリスト</text>
<text x="772.3" y="950.1" font-size="11" fill="#5f6368" textLength="82.1" lengthAdjust="spacingAndGlyphs">02:20 PM Sep 06</text>
<text x="772.3" y="977.9" font-size="12" fill="#1a73e8" font-weight="700" textLength="106.5" lengthAdjust="spacingAndGlyphs">ATKK-HQ-1F-x530-1</text>
<text x="1380.0" y="976.9" font-size="10" fill="#ef5350" textLength="19.7" lengthAdjust="spacingAndGlyphs">不良</text>
<text x="772.3" y="1003.7" font-size="12" fill="#1a73e8" font-weight="700" textLength="106.5" lengthAdjust="spacingAndGlyphs">ATKK-HQ-2F-x230-1</text>
<text x="1380.0" y="1002.7" font-size="10" fill="#ffc107" textLength="19.7" lengthAdjust="spacingAndGlyphs">妥当</text>
<text x="772.3" y="1029.5" font-size="12" fill="#1a73e8" font-weight="700" textLength="130.0" lengthAdjust="spacingAndGlyphs">ATKK-HQ-1F-AR4050S-1</text>
<text x="1380.0" y="1028.5" font-size="10" fill="#ffc107" textLength="19.7" lengthAdjust="spacingAndGlyphs">妥当</text>
<text x="772.3" y="1055.3" font-size="12" fill="#1a73e8" font-weight="700" textLength="107.5" lengthAdjust="spacingAndGlyphs">ATKK-HQ-3F-x230-3</text>
<text x="1380.0" y="1054.3" font-size="10" fill="#66bb6a" textLength="19.7" lengthAdjust="spacingAndGlyphs">良好</text>
<text x="772.3" y="1081.1" font-size="12" fill="#1a73e8" font-weight="700" textLength="93.4" lengthAdjust="spacingAndGlyphs">ATKK-HQ-1F-VAA</text>
<text x="1380.0" y="1080.1" font-size="10" fill="#66bb6a" textLength="19.7" lengthAdjust="spacingAndGlyphs">良好</text>
<text x="772.3" y="1106.9" font-size="12" fill="#1a73e8" font-weight="700" textLength="163.1" lengthAdjust="spacingAndGlyphs">ATKK-Kyobashi-2F-AR4050S-2</text>
<text x="1380.0" y="1105.9" font-size="10" fill="#66bb6a" textLength="19.7" lengthAdjust="spacingAndGlyphs">良好</text>
<text x="89.8" y="1264.6" font-size="14.8" fill="#212529" textLength="146.2" lengthAdjust="spacingAndGlyphs">トラフィック状態: 履歴</text>
<text x="317.2" y="1303.9" font-size="12" fill="#666" textLength="23.8" lengthAdjust="spacingAndGlyphs">良好</text>
<text x="365.4" y="1303.9" font-size="12" fill="#666" textLength="23.4" lengthAdjust="spacingAndGlyphs">妥当</text>
<text x="412.8" y="1303.9" font-size="12" fill="#666" textLength="24.2" lengthAdjust="spacingAndGlyphs">不良</text>
<text x="461.0" y="1303.9" font-size="12" fill="#666" textLength="47.4" lengthAdjust="spacingAndGlyphs">到達不能</text>
<text x="124.3" y="1497.8" font-size="10" fill="#666" text-anchor="end">0</text>
<text x="124.3" y="1480.1" font-size="10" fill="#666" text-anchor="end">1</text>
<text x="124.3" y="1462.4" font-size="10" fill="#666" text-anchor="end">2</text>
<text x="124.3" y="1444.7" font-size="10" fill="#666" text-anchor="end">3</text>
<text x="124.3" y="1427.0" font-size="10" fill="#666" text-anchor="end">4</text>
<text x="124.3" y="1409.3" font-size="10" fill="#666" text-anchor="end">5</text>
<text x="124.3" y="1391.6" font-size="10" fill="#666" text-anchor="end">6</text>
<text x="124.3" y="1373.9" font-size="10" fill="#666" text-anchor="end">7</text>
<text x="124.3" y="1356.2" font-size="10" fill="#666" text-anchor="end">8</text>
<text x="124.3" y="1338.5" font-size="10" fill="#666" text-anchor="end">9</text>
<text x="124.3" y="1320.8" font-size="10" fill="#666" text-anchor="end">10</text>
<text x="209.1" y="1514.1" font-size="10" fill="#666" text-anchor="middle">Sep 5 14:00</text>
<text x="356.1" y="1514.1" font-size="10" fill="#666" text-anchor="middle">Sep 5 21:40</text>
<text x="504.5" y="1514.1" font-size="10" fill="#666" text-anchor="middle">Sep 6 5:20</text>
<text x="650.1" y="1514.1" font-size="10" fill="#666" text-anchor="middle">Sep 6 13:00</text>
<text x="102.5" y="1405.6" font-size="12" fill="#666" text-anchor="middle" transform="rotate(-90 102.5 1405.6)">プローブ</text>
<text x="772.7" y="1264.6" font-size="14.8" fill="#212529" textLength="217.8" lengthAdjust="spacingAndGlyphs">インターフェースカウンター: 履歴</text>
<text x="1001.2" y="1303.9" font-size="12" fill="#666" textLength="23.8" lengthAdjust="spacingAndGlyphs">良好</text>
<text x="1049.4" y="1303.9" font-size="12" fill="#666" textLength="23.4" lengthAdjust="spacingAndGlyphs">妥当</text>
<text x="1096.8" y="1303.9" font-size="12" fill="#666" textLength="24.2" lengthAdjust="spacingAndGlyphs">不良</text>
<text x="1145.0" y="1303.9" font-size="12" fill="#666" textLength="47.4" lengthAdjust="spacingAndGlyphs">到達不能</text>
<text x="808.3" y="1497.8" font-size="10" fill="#666" text-anchor="end">0</text>
<text x="808.3" y="1480.1" font-size="10" fill="#666" text-anchor="end">1</text>
<text x="808.3" y="1462.4" font-size="10" fill="#666" text-anchor="end">2</text>
<text x="808.3" y="1444.7" font-size="10" fill="#666" text-anchor="end">3</text>
<text x="808.3" y="1427.0" font-size="10" fill="#666" text-anchor="end">4</text>
<text x="808.3" y="1409.3" font-size="10" fill="#666" text-anchor="end">5</text>
<text x="808.3" y="1391.6" font-size="10" fill="#666" text-anchor="end">6</text>
<text x="808.3" y="1373.9" font-size="10" fill="#666" text-anchor="end">7</text>
<text x="808.3" y="1356.2" font-size="10" fill="#666" text-anchor="end">8</text>
<text x="808.3" y="1338.5" font-size="10" fill="#666" text-anchor="end">9</text>
<text x="808.3" y="1320.8" font-size="10" fill="#666" text-anchor="end">10</text>
<text x="893.1" y="1514.1" font-size="10" fill="#666" text-anchor="middle">Sep 5 14:00</text>
<text x="1040.1" y="1514.1" font-size="10" fill="#666" text-anchor="middle">Sep 5 21:40</text>
<text x="1188.5" y="1514.1" font-size="10" fill="#666" text-anchor="middle">Sep 6 5:20</text>
<text x="1334.1" y="1514.1" font-size="10" fill="#666" text-anchor="middle">Sep 6 13:00</text>
<text x="786.5" y="1405.6" font-size="12" fill="#666" text-anchor="middle" transform="rotate(-90 786.5 1405.6)">デバイス</text>
</svg>
</body>
</html>
